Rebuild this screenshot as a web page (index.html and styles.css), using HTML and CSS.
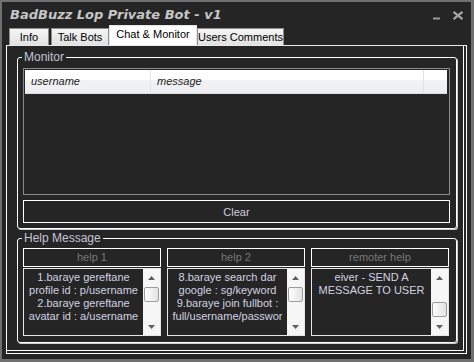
FILE: index.html
```html
<!DOCTYPE html>
<html lang="en">
<head>
    <meta charset="UTF-8">
    <title>BadBuzz Lop Private Bot - v1</title>
    <link rel="stylesheet" href="styles.css">
</head>
<body>
    <div class="window">
        <div class="titlebar">
            <span class="title">BadBuzz Lop Private Bot - v1</span>
            <div class="controls">
                <svg class="min" width="8" height="3" viewBox="0 0 8 3"><rect x="0" y="0.5" width="7" height="2" fill="#9a9a9a"/></svg>
                <svg class="close" width="12" height="9" viewBox="0 0 12 9"><path d="M1.5 0.8 L10.5 8.2 M10.5 0.8 L1.5 8.2" stroke="#a4a4a4" stroke-width="2.2"/></svg>
            </div>
        </div>

        <div class="tabs">
            <div class="tab tab-info">Info</div>
            <div class="tab tab-talk">Talk Bots</div>
            <div class="tab tab-chat active">Chat &amp; Monitor</div>
            <div class="tab tab-users">Users Comments</div>
        </div>

        <div class="tabpage">
            <fieldset class="group monitor">
                <legend>Monitor</legend>
                <div class="listview">
                    <div class="lv-header">
                        <div class="col col-user">username</div>
                        <div class="col col-msg">message</div>
                        <div class="col col-fill"></div>
                    </div>
                </div>
                <button class="clear">Clear</button>
            </fieldset>

            <fieldset class="group help">
                <legend>Help Message</legend>
                <div class="help-row">
                    <div class="help-col">
                        <div class="help-label">help 1</div>
                        <div class="textbox">
                            <div class="text">
                                <div>1.baraye gereftane</div>
                                <div>profile id : p/username</div>
                                <div>2.baraye gereftane</div>
                                <div>avatar id : a/username</div>
                            </div>
                            <div class="scroll">
                                <div class="arrow"><svg width="7" height="4" viewBox="0 0 7 4"><path d="M0 4 L3.5 0 L7 4 Z" fill="#5e5e5e"/></svg></div>
                                <div class="track"><div class="thumb"></div></div>
                                <div class="arrow"><svg width="7" height="4" viewBox="0 0 7 4"><path d="M0 0 L7 0 L3.5 4 Z" fill="#5e5e5e"/></svg></div>
                            </div>
                        </div>
                    </div>
                    <div class="help-col">
                        <div class="help-label">help 2</div>
                        <div class="textbox">
                            <div class="text">
                                <div>8.baraye search dar</div>
                                <div>google : sg/keyword</div>
                                <div>9.baraye join fullbot :</div>
                                <div>full/username/passwor</div>
                            </div>
                            <div class="scroll">
                                <div class="arrow"><svg width="7" height="4" viewBox="0 0 7 4"><path d="M0 4 L3.5 0 L7 4 Z" fill="#5e5e5e"/></svg></div>
                                <div class="track"><div class="thumb"></div></div>
                                <div class="arrow"><svg width="7" height="4" viewBox="0 0 7 4"><path d="M0 0 L7 0 L3.5 4 Z" fill="#5e5e5e"/></svg></div>
                            </div>
                        </div>
                    </div>
                    <div class="help-col">
                        <div class="help-label">remoter help</div>
                        <div class="textbox">
                            <div class="text">
                                <div>eiver - SEND A</div>
                                <div>MESSAGE TO USER</div>
                            </div>
                            <div class="scroll">
                                <div class="arrow"><svg width="7" height="4" viewBox="0 0 7 4"><path d="M0 4 L3.5 0 L7 4 Z" fill="#5e5e5e"/></svg></div>
                                <div class="track"><div class="thumb low"></div></div>
                                <div class="arrow"><svg width="7" height="4" viewBox="0 0 7 4"><path d="M0 0 L7 0 L3.5 4 Z" fill="#5e5e5e"/></svg></div>
                            </div>
                        </div>
                    </div>
                </div>
            </fieldset>
        </div>
    </div>
</body>
</html>
```

FILE: styles.css
```css
body {
    margin: 0;
    background-color: #252525;
    font-family: "Liberation Sans", Arial, sans-serif;
}

.window {
    box-sizing: border-box;
    width: 474px;
    height: 362px;
    border: 2px solid #707070;
    border-right-width: 3px;
    border-bottom-width: 3px;
    background-color: #252525;
    display: flex;
    flex-direction: column;
}

.titlebar {
    height: 23px;
    display: flex;
    align-items: center;
    justify-content: space-between;
    padding: 0 7px 0 8px;
}

.title {
    font-family: "DejaVu Sans", sans-serif;
    font-size: 13px;
    font-weight: bold;
    font-style: italic;
    line-height: 16px;
    color: #c6c6c6;
    margin-top: 3px;
}

.controls {
    display: flex;
    align-items: center;
    gap: 11px;
    margin-top: 4px;
}

.controls .min {
    margin-top: 6px;
}

/* tab strip */
.tabs {
    height: 20px;
    display: flex;
    align-items: flex-end;
    padding-left: 7px;
}

.tab {
    box-sizing: border-box;
    height: 17px;
    border: 1px solid #8f8f8f;
    border-bottom: none;
    background: linear-gradient(#f5f5f5, #e1e1e1);
    font-size: 11px;
    line-height: 16px;
    color: #000;
    text-align: center;
}

.tab-info {
    width: 40px;
    margin-right: 2px;
}

.tab-talk {
    width: 58px;
}

.tab-chat {
    width: 88px;
}

.tab-users {
    width: 87px;
}

.tab.active {
    height: 20px;
    background: #ffffff;
    border-color: #e6e6e6;
    line-height: 17px;
}

.tabpage {
    flex: 1;
    margin: 0 4px 5px 4px;
    border: 1px solid #ffffff;
    border-top-color: #e9e9e9;
    box-shadow: inset -2px -2px 0 #252525, inset -3px -3px 0 #ffffff;
    padding: 5px 9px 0 10px;
}

/* group boxes */
.group {
    margin: 0;
    min-width: 0;
    border: 1px solid #ffffff;
    border-radius: 3px;
    box-shadow: 1px 1px 0 #c9ccd4;
    padding: 0 6px 5px 5px;
}

.group legend {
    padding: 0 2px;
    margin-left: -1px;
    font-size: 12px;
    line-height: 13px;
    color: #c4c4d4;
}

.help {
    margin-top: 3px;
    padding-bottom: 6px;
}

/* monitor list */
.listview {
    box-sizing: border-box;
    height: 127px;
    margin-top: 4px;
    border: 1px solid #8a8a8a;
    padding: 1px;
    background-color: #252525;
}

.lv-header {
    display: flex;
    height: 24px;
    margin-right: 1px;
    background: linear-gradient(#ffffff 0%, #ffffff 45%, #f1f2f4 45%, #eceef1 100%);
    border-bottom: 1px solid #dcdde0;
    box-sizing: border-box;
}

.col {
    box-sizing: border-box;
    font-size: 11px;
    font-style: italic;
    line-height: 22px;
    color: #1c1c1c;
    padding-left: 6px;
    border-right: 1px solid #e2e3e6;
}

.col-user {
    width: 126px;
}

.col-msg {
    width: 273px;
}

.col-fill {
    flex: 1;
    border-right: none;
}

.clear {
    display: block;
    box-sizing: border-box;
    width: 100%;
    height: 23px;
    margin-top: 5px;
    background-color: #252525;
    border: 1px solid #ffffff;
    color: #d0d0dc;
    font-family: "Liberation Sans", Arial, sans-serif;
    font-size: 11px;
    padding: 0;
}

/* help boxes */
.help-row {
    display: flex;
    gap: 6px;
    margin-top: 3px;
}

.help-col {
    width: 138px;
    display: flex;
    flex-direction: column;
    gap: 1px;
}

.help-label {
    box-sizing: border-box;
    height: 19px;
    border: 1px solid #ffffff;
    text-align: center;
    font-size: 11px;
    line-height: 17px;
    color: #777777;
}

.textbox {
    box-sizing: border-box;
    height: 68px;
    border: 1px solid #e6e6e6;
    display: flex;
}

.text {
    flex: 1;
    overflow: hidden;
    white-space: nowrap;
    text-align: center;
    padding-top: 2px;
    font-size: 11px;
    line-height: 13px;
    color: #d2d2e2;
}

.scroll {
    width: 17px;
    background-color: #f6f6f6;
    display: flex;
    flex-direction: column;
}

.arrow {
    height: 17px;
    display: flex;
    align-items: center;
    justify-content: center;
}

.track {
    flex: 1;
}

.thumb {
    box-sizing: border-box;
    width: 15px;
    height: 15px;
    margin: 1px 0 0 1px;
    border: 1px solid #9c9c9c;
    border-radius: 2px;
    background: linear-gradient(90deg, #fefefe, #e2e2e2);
}

.thumb.low {
    margin-top: 16px;
}
```
